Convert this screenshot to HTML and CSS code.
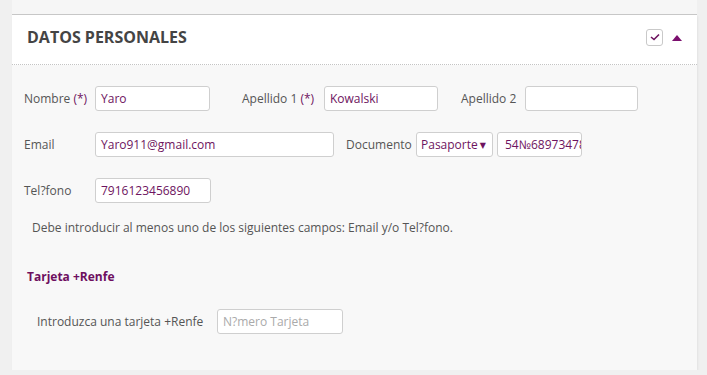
FILE: index.html
```html
<!DOCTYPE html>
<html lang="es">
<head>
<meta charset="utf-8">
<title>Datos personales</title>
<link rel="stylesheet" href="styles.css">
</head>
<body>
<div class="page">
  <div class="prev-panel"></div>
  <section class="panel">
    <header class="panel-head">
      <h2 class="panel-title">DATOS PERSONALES</h2>
      <div class="head-tools">
        <span class="check-box">
          <svg width="10" height="8" viewBox="0 0 10 8"><path d="M1 4 L4 6.5 L9 1.5" fill="none" stroke="#6e1460" stroke-width="1.6"/></svg>
        </span>
        <span class="caret-up"></span>
      </div>
    </header>
    <div class="panel-body">
      <div class="form-row">
        <label class="lbl w71">Nombre <span class="req">(*)</span></label>
        <div class="field w115">Yaro</div>
        <label class="lbl ml32 w82">Apellido 1 <span class="req">(*)</span></label>
        <div class="field w114">Kowalski</div>
        <label class="lbl ml23 w64">Apellido 2</label>
        <div class="field w113"></div>
      </div>
      <div class="form-row">
        <label class="lbl w71">Email</label>
        <div class="field w239">Yaro911@gmail.com</div>
        <label class="lbl ml12 w70">Documento</label>
        <div class="field select w77">Pasaporte<span class="tri">&#9660;</span></div>
        <div class="field w85 ml4 clip">54№68973478</div>
      </div>
      <div class="form-row">
        <label class="lbl w71">Tel?fono</label>
        <div class="field w116">7916123456890</div>
      </div>
      <p class="note">Debe introducir al menos uno de los siguientes campos: Email y/o Tel?fono.</p>
      <h3 class="sub-title">Tarjeta +Renfe</h3>
      <div class="card-row">
        <span class="card-lbl">Introduzca una tarjeta +Renfe</span>
        <div class="field placeholder w126">N?mero Tarjeta</div>
      </div>
    </div>
  </section>
</div>
</body>
</html>
```
FILE: styles.css
```css
html, body {
  margin: 0;
  padding: 0;
  background: #f0f0f0;
  font-family: "Open Sans", "DejaVu Sans", sans-serif;
  color: #555;
}
.page {
  width: 685px;
  margin-left: 12px;
}
.prev-panel {
  height: 14px;
  background: #f6f6f6;
  border-bottom: 1px solid #c8c8c8;
}
.panel {
  background: #f8f8f8;
  box-shadow: 1px 1px 2px rgba(0,0,0,0.06);
}
.panel-head {
  box-sizing: border-box;
  height: 50px;
  background: #fff;
  border-bottom: 1px dotted #c4c4c4;
  display: flex;
  align-items: center;
  justify-content: space-between;
  padding: 0 15px 5px 15px;
}
.panel-title {
  margin: 0;
  font-size: 16px;
  font-weight: 700;
  color: #444;
  letter-spacing: 0;
}
.head-tools {
  display: flex;
  align-items: center;
  gap: 9px;
}
.check-box {
  width: 15px;
  height: 15px;
  border: 1px solid #c9c9c9;
  border-radius: 3px;
  display: flex;
  align-items: center;
  justify-content: center;
  background: #fff;
}
.caret-up {
  width: 0;
  height: 0;
  border-left: 5.5px solid transparent;
  border-right: 5.5px solid transparent;
  border-bottom: 6px solid #7b0f6e;
  margin-top: 1px;
}
.panel-body {
  padding: 21px 0 36px 12px;
}
.form-row {
  display: flex;
  align-items: center;
  height: 25px;
  margin-bottom: 21px;
}
.lbl {
  font-size: 12px;
  color: #555;
  white-space: nowrap;
}
.req { color: #6e1460; }
.field {
  box-sizing: border-box;
  height: 25px;
  border: 1px solid #cfcfcf;
  border-radius: 3px;
  background: #fff;
  font-size: 12px;
  color: #6e1460;
  padding: 0 5px;
  display: flex;
  align-items: center;
  white-space: nowrap;
  overflow: hidden;
}
.field.clip { padding-left: 7px; }
.field.select { padding-left: 4px; }
.tri { font-size: 8px; margin-left: 2px; color: #6e1460; }
.placeholder { color: #aaa; }
.w64 { width: 64px; }
.w70 { width: 70px; }
.w71 { width: 71px; }
.w77 { width: 77px; }
.w82 { width: 82px; }
.w85 { width: 85px; }
.w113 { width: 113px; }
.w114 { width: 114px; }
.w115 { width: 115px; }
.w116 { width: 116px; }
.w126 { width: 126px; }
.w239 { width: 239px; }
.ml4 { margin-left: 4px; }
.ml12 { margin-left: 12px; }
.ml23 { margin-left: 23px; }
.ml32 { margin-left: 32px; }
.note {
  margin: -5px 0 0 8px;
  font-size: 12px;
  color: #555;
  line-height: 18px;
}
.sub-title {
  margin: 31px 0 0 3px;
  font-size: 12px;
  font-weight: 700;
  color: #6e0f5f;
  line-height: 18px;
}
.card-row {
  display: flex;
  align-items: center;
  margin-top: 23px;
  margin-left: 13px;
}
.card-lbl {
  font-size: 12px;
  color: #555;
  width: 180px;
}
```
